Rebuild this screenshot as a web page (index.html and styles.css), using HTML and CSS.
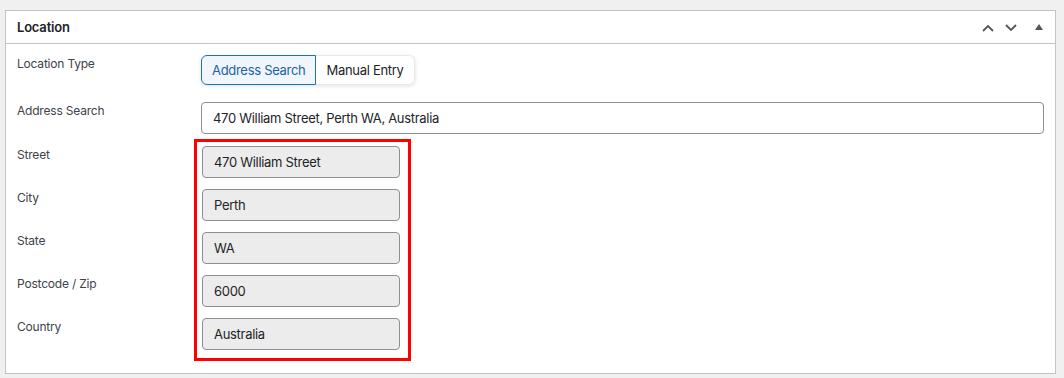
FILE: index.html
```html
<!DOCTYPE html>
<html lang="en">
<head>
    <meta charset="UTF-8">
    <title>Location</title>
    <link rel="stylesheet" href="styles.css">
</head>
<body>
    <div class="postbox">
        <div class="postbox-header">
            <h2>Location</h2>
            <div class="handle-actions">
                <button class="handle-btn" aria-label="Move up">
                    <svg width="12" height="8" viewBox="0 0 12 8"><path d="M1 7 L6 2 L11 7" fill="none" stroke="#50575e" stroke-width="1.8"/></svg>
                </button>
                <button class="handle-btn" aria-label="Move down">
                    <svg width="12" height="8" viewBox="0 0 12 8"><path d="M1 1 L6 6 L11 1" fill="none" stroke="#50575e" stroke-width="1.8"/></svg>
                </button>
                <button class="handle-btn toggle" aria-label="Toggle panel">
                    <svg width="8" height="6" viewBox="0 0 8 6"><path d="M0 6 L4 0 L8 6 Z" fill="#50575e"/></svg>
                </button>
            </div>
        </div>

        <div class="inside">
            <div class="field-row">
                <label class="field-label">Location Type</label>
                <div class="segmented">
                    <button class="seg-btn active">Address Search</button>
                    <button class="seg-btn">Manual Entry</button>
                </div>
            </div>

            <div class="field-row search-row">
                <label class="field-label">Address Search</label>
                <input class="text-input wide" type="text" value="470 William Street, Perth WA, Australia">
            </div>

            <div class="field-row address-row">
                <div class="label-stack">
                    <label class="field-label">Street</label>
                    <label class="field-label">City</label>
                    <label class="field-label">State</label>
                    <label class="field-label">Postcode / Zip</label>
                    <label class="field-label">Country</label>
                </div>
                <div class="highlight">
                    <input class="text-input readonly" type="text" value="470 William Street" readonly>
                    <input class="text-input readonly" type="text" value="Perth" readonly>
                    <input class="text-input readonly" type="text" value="WA" readonly>
                    <input class="text-input readonly" type="text" value="6000" readonly>
                    <input class="text-input readonly" type="text" value="Australia" readonly>
                </div>
            </div>
        </div>
    </div>
</body>
</html>
```

FILE: styles.css
```css
* {
    margin: 0;
    padding: 0;
    box-sizing: border-box;
}

body {
    background-color: #f0f0f1;
    color: #1d2327;
    font-family: 'Inter', 'Noto Sans', sans-serif;
    font-size: 13px;
    padding: 10px 8px 0 5px;
}

/* Panel */
.postbox {
    background-color: #fff;
    border: 1px solid #c3c4c7;
    height: 364px;
}

.postbox-header {
    display: flex;
    align-items: center;
    justify-content: space-between;
    height: 33px;
    border-bottom: 1px solid #c3c4c7;
    padding: 0 0 0 11px;
}

.postbox-header h2 {
    font-size: 13px;
    font-weight: 600;
    letter-spacing: -0.2px;
}

.handle-actions {
    display: flex;
    align-items: center;
    margin-top: 2px;
}

.handle-btn {
    background: none;
    border: none;
    width: 23px;
    height: 22px;
    display: flex;
    align-items: center;
    justify-content: center;
}

.handle-btn.toggle {
    width: 33px;
    padding-bottom: 2px;
}

/* Fields */
.inside {
    padding: 11px 11px 0 11px;
}

.field-row {
    display: flex;
    align-items: flex-start;
}

.field-label {
    display: block;
    width: 184px;
    flex-shrink: 0;
    line-height: 18px;
    color: #3c434a;
    font-size: 12px;
    letter-spacing: -0.2px;
}

.segmented {
    display: flex;
    border-radius: 6px;
    box-shadow: 0 1px 4px rgba(0, 0, 0, 0.12);
}

.seg-btn {
    font-family: inherit;
    font-size: 13px;
    letter-spacing: -0.3px;
    height: 30px;
    padding: 0 10px;
    background-color: #fff;
    color: #1d2327;
    border: 1px solid #e8e8e8;
    border-left: none;
    border-radius: 0 6px 6px 0;
}

.seg-btn.active {
    background-color: #f0f6fc;
    color: #1a63a5;
    border: 1px solid #2271b1;
    border-radius: 6px 0 0 6px;
}

.search-row {
    margin-top: 17px;
}

.text-input {
    font-family: inherit;
    font-size: 13px;
    letter-spacing: -0.3px;
    color: #1d2327;
    height: 32px;
    padding: 0 11px;
    border: 1px solid #8c8f94;
    border-radius: 4px;
    background-color: #fff;
}

.text-input.wide {
    flex: 1;
}

.text-input.readonly {
    background-color: #ececec;
    width: 198px;
    height: 32px;
}

.address-row {
    margin-top: 5px;
}

.label-stack {
    display: flex;
    flex-direction: column;
    gap: 25px;
    padding-top: 7px;
}

.highlight {
    margin-left: -7px;
    border: 3px solid #ff0000;
    padding: 4px 8px 8px 5px;
    display: flex;
    flex-direction: column;
    gap: 11px;
}
```
